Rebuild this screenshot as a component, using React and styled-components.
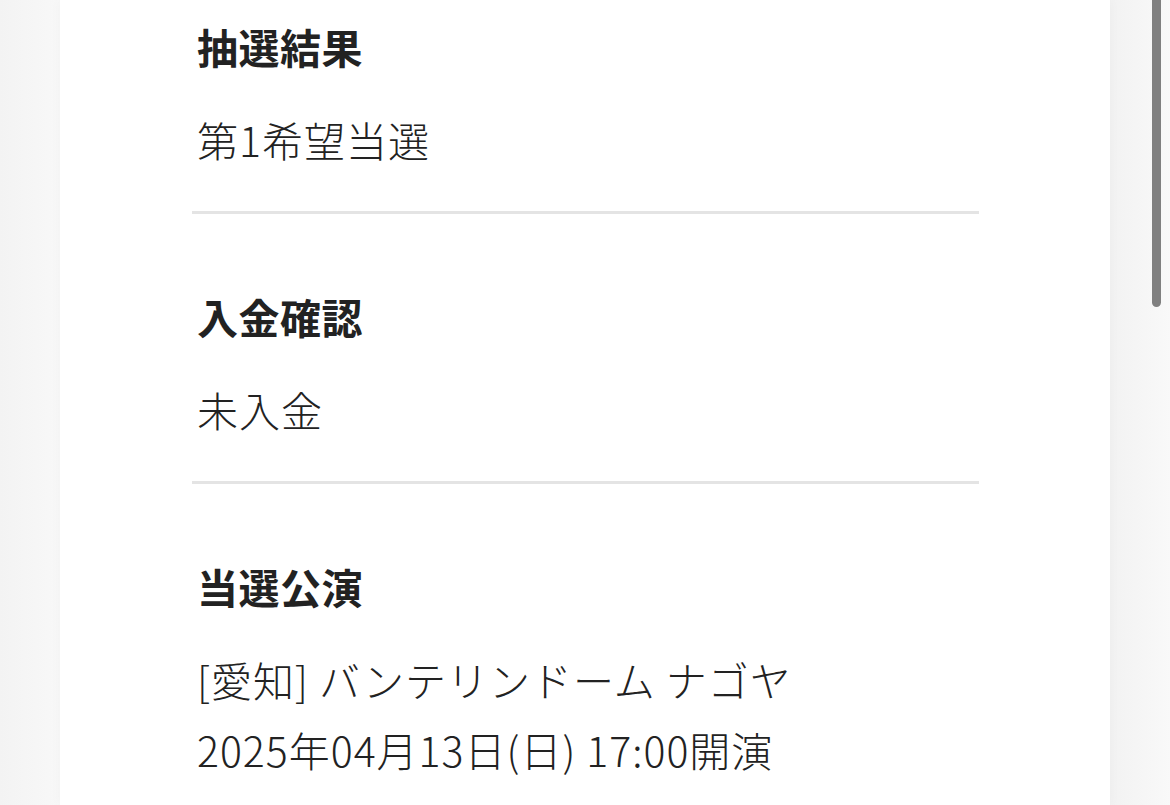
import React from 'react';
import styled, { createGlobalStyle } from 'styled-components';

const GlobalStyle = createGlobalStyle`
    html, body {
        margin: 0;
        padding: 0;
        height: 100%;
        overflow: hidden;
        background: #f6f6f6;
    }

    body {
        font-family: "Noto Sans CJK JP", "Noto Sans", sans-serif;
        color: #222;
    }
`;

const Page = styled.div`
    position: relative;
    display: flex;
    justify-content: center;
    height: 805px;
    background: linear-gradient(90deg, #f3f3f3 0, #f8f8f8 60px, #f8f8f8 1110px, #f2f2f2 1110px, #f9f9f9 1170px);
`;

const Card = styled.main`
    width: 1050px;
    height: 100%;
    background: #fff;
    box-shadow: 0 0 12px rgba(0, 0, 0, 0.03);
    padding: 16px 0 0 132px;
    box-sizing: border-box;
`;

const List = styled.div`
    width: 787px;
`;

const Section = styled.section`
    padding: 72px 0 37px 0;
    border-bottom: 3px solid #e4e4e4;

    &:first-child {
        padding-top: 0;
    }

    &:last-child {
        border-bottom: none;
    }
`;

const Heading = styled.h2`
    margin: 0 0 28px 0;
    padding-left: 5px;
    font-size: 41px;
    line-height: 60px;
    font-weight: 700;
    letter-spacing: 0.5px;
`;

const Body = styled.p`
    margin: 0;
    padding-left: 5px;
    font-size: 41px;
    line-height: 70px;
    font-weight: 300;
    letter-spacing: 1px;
`;

const ScrollThumb = styled.div`
    position: absolute;
    top: -6px;
    right: 9px;
    width: 9px;
    height: 313px;
    border-radius: 5px;
    background: #808080;
`;

const sections = [
    { title: '抽選結果', lines: ['第1希望当選'] },
    { title: '入金確認', lines: ['未入金'] },
    {
        title: '当選公演',
        lines: ['[愛知] バンテリンドーム ナゴヤ', '2025年04月13日(日) 17:00開演'],
    },
];

const App = () => {
    return (
        <>
            <GlobalStyle />
            <Page>
                <Card>
                    <List>
                        {sections.map((section) => (
                            <Section key={section.title}>
                                <Heading>{section.title}</Heading>
                                {section.lines.map((line) => (
                                    <Body key={line}>{line}</Body>
                                ))}
                            </Section>
                        ))}
                    </List>
                </Card>
                <ScrollThumb />
            </Page>
        </>
    );
};

export default App;
